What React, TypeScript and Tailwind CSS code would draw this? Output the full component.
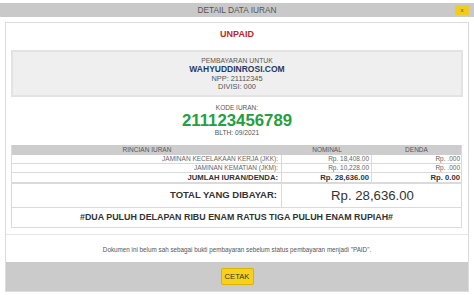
import React from 'react';

const rows = [
  { label: 'JAMINAN KECELAKAAN KERJA (JKK):', nominal: 'Rp. 18,408.00', denda: 'Rp. .000' },
  { label: 'JAMINAN KEMATIAN (JKM):', nominal: 'Rp. 10,228.00', denda: 'Rp. .000' },
];

const App: React.FC = () => {
  return (
    <div className="w-[474px] h-[295px] bg-white font-['Liberation_Sans',Arial,sans-serif] overflow-hidden">
      {/* Title bar */}
      <div className="relative mt-[3px] h-[14px] bg-[#c9c9c9] flex items-center justify-center">
        <span className="text-[8.3px] leading-none text-[#555]">DETAIL DATA IURAN</span>
        <button className="absolute right-[5px] top-[2px] w-[14px] h-[10px] bg-[#f2cb1f] rounded-[1px] flex items-center justify-center text-[6px] leading-none text-[#555]">
          x
        </button>
      </div>

      {/* Dialog frame */}
      <div className="ml-[5px] mt-[5px] w-[464px] h-[270px] border border-[#dcdcdc] flex flex-col">
        <div className="h-[27px] pt-[5px] text-center text-[9px] leading-[12px] font-bold text-[#c0262d]">UNPAID</div>

        <div className="mx-[5px] h-[47px] border-2 border-[#e3e3e3] bg-[#efefef] pt-[5px] flex flex-col items-center text-[#555]">
          <div className="text-[6.8px] leading-[8px]">PEMBAYARAN UNTUK</div>
          <div className="text-[8.5px] leading-[9px] font-bold text-[#1f3b64]">WAHYUDDINROSI.COM</div>
          <div className="text-[7.4px] leading-[9px]">NPP: 21112345</div>
          <div className="text-[7.4px] leading-[8px]">DIVISI: 000</div>
        </div>

        <div className="h-[48px] pt-[7px] flex flex-col items-center text-[#555]">
          <div className="text-[6.5px] leading-[8px]">KODE IURAN:</div>
          <div className="text-[16.8px] leading-[17px] font-bold text-[#24a040]">211123456789</div>
          <div className="text-[6.7px] leading-[8px]">BLTH: 09/2021</div>
        </div>

        {/* Rincian table */}
        <div className="mx-[5px] w-[451px] border-x border-b border-[#dadada]">
          <div className="h-[10px] bg-[#cdcdcd] grid grid-cols-[270px_90px_89px] items-center text-[6.5px] leading-none text-[#555]">
            <div className="text-center">RINCIAN IURAN</div>
            <div className="text-center">NOMINAL</div>
            <div className="text-center">DENDA</div>
          </div>
          {rows.map(r => (
            <div key={r.label} className="h-[9px] grid grid-cols-[270px_90px_89px] border-b border-[#dadada] text-[6.5px] leading-[8px] text-[#666]">
              <div className="text-right pr-[3px] border-r border-[#dadada]">{r.label}</div>
              <div className="text-right pr-[2px] border-r border-[#dadada]">{r.nominal}</div>
              <div className="text-right pr-[1px]">{r.denda}</div>
            </div>
          ))}
          <div className="h-[11px] grid grid-cols-[270px_90px_89px] border-b-2 border-[#dadada] text-[7.7px] leading-[9px] font-bold text-[#333]">
            <div className="text-right pr-[3px] border-r border-[#dadada]">JUMLAH IURAN/DENDA:</div>
            <div className="text-right pr-[2px] border-r border-[#dadada]">Rp. 28,636.00</div>
            <div className="text-right pr-[1px]">Rp. 0.00</div>
          </div>
          <div className="h-[24px] grid grid-cols-[270px_181px] border-b border-[#dadada] text-[#333]">
            <div className="flex items-center justify-end pr-[4px] border-r border-[#dadada] text-[9.5px] font-bold">TOTAL YANG DIBAYAR:</div>
            <div className="flex items-center justify-center text-[13.2px]">Rp. 28,636.00</div>
          </div>
          <div className="h-[19px] flex items-center justify-center text-[8.9px] font-bold text-[#333]">
            #DUA PULUH DELAPAN RIBU ENAM RATUS TIGA PULUH ENAM RUPIAH#
          </div>
        </div>

        <div className="mt-[6px] h-[28px] border-t border-[#e6e6e6] flex items-center justify-center pt-[3px] text-[6.3px] text-[#555]">
          Dokumen ini belum sah sebagai bukti pembayaran sebelum status pembayaran menjadi "PAID".
        </div>

        <div className="h-[29px] bg-[#cbcbcb] flex items-center justify-center">
          <button className="w-[33px] h-[17px] bg-[#f8d21a] border border-[#dcb400] rounded-[2px] text-[7.6px] leading-none text-[#333]">
            CETAK
          </button>
        </div>
      </div>
    </div>
  );
};

export default App;
